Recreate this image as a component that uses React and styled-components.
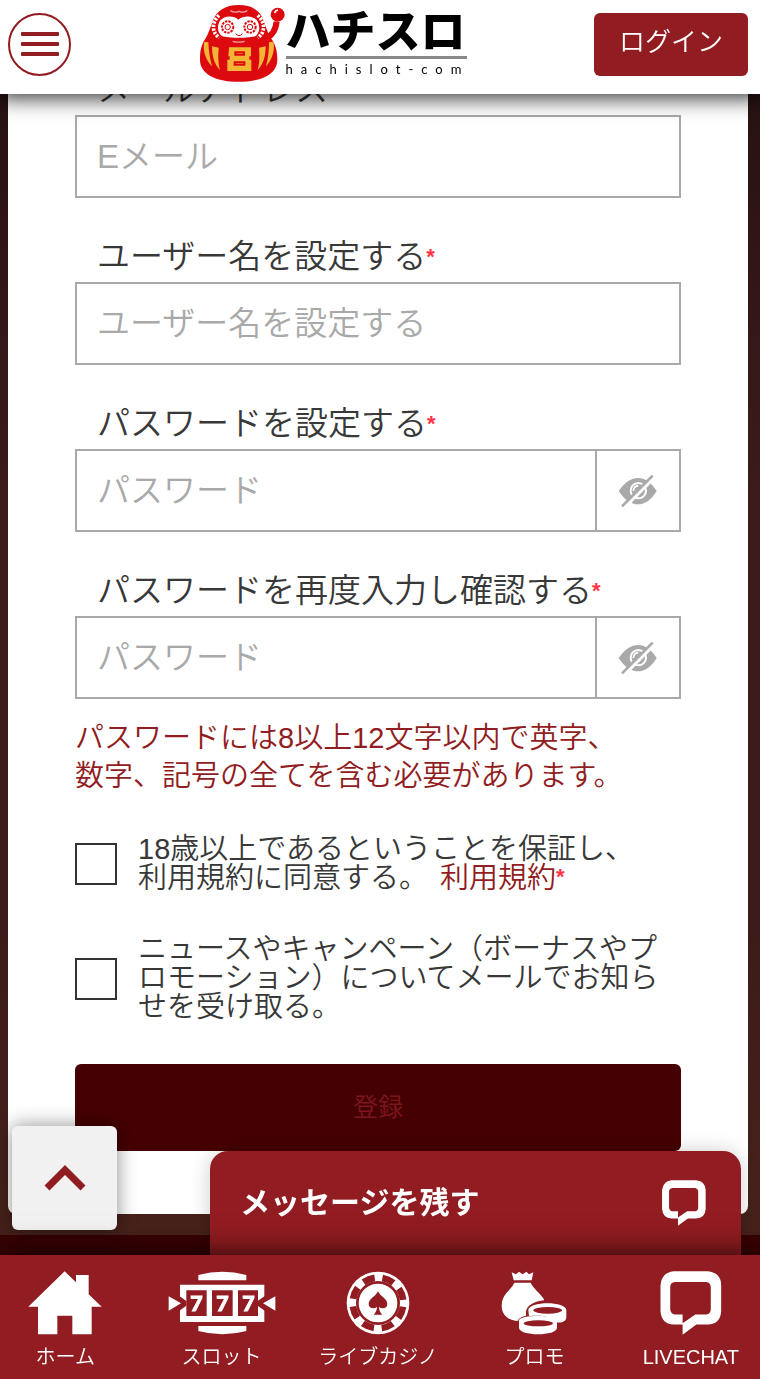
import React from "react";
import styled, { createGlobalStyle } from "styled-components";

const RED = "#911c21";

const GlobalStyle = createGlobalStyle`
  *, *::before, *::after { box-sizing: border-box; }
  html, body { margin: 0; padding: 0; }
  body {
    background: #3a0003;
    color: #383838;
    font-family: "Liberation Sans", "Noto Sans CJK JP", sans-serif;
    font-weight: 350;
  }
  button, input { font: inherit; }
  button { line-height: 1; }
`;

const Header = styled.header`
  position: fixed;
  top: 0;
  left: 0;
  right: 0;
  z-index: 10;
  height: 94px;
  padding: 0 12px 6px 8px;
  display: flex;
  align-items: center;
  justify-content: space-between;
  background: #fff;
  box-shadow: 0 2px 20px 2px rgba(0, 0, 0, 0.8);
`;

const MenuButton = styled.button`
  width: 63px;
  height: 63px;
  padding: 0;
  border: 2px solid ${RED};
  border-radius: 50%;
  background: none;
  display: flex;
  flex-direction: column;
  align-items: center;
  justify-content: center;
  gap: 6px;
`;

const MenuBar = styled.span`
  width: 38px;
  height: 4px;
  border-radius: 1px;
  background: ${RED};
`;

const Logo = styled.a`
  display: flex;
  align-items: flex-start;
  padding-bottom: 2px;
  color: #000;
  text-decoration: none;
`;

const Wordmark = styled.span`
  display: flex;
  flex-direction: column;
  width: 181px;
`;

const WordmarkName = styled.span`
  padding-bottom: 2px;
  border-bottom: 3px solid #888;
  font-family: "Noto Sans CJK JP", sans-serif;
  font-size: 45px;
  line-height: 50px;
  font-weight: 900;
`;

const WordmarkDomain = styled.span`
  font-family: Lato, sans-serif;
  font-size: 13px;
  line-height: 20px;
  font-weight: 400;
  letter-spacing: 8px;
  white-space: nowrap;
`;

const LoginButton = styled.button`
  width: 154px;
  height: 63px;
  padding: 0 0 4px;
  border: 0;
  border-radius: 6px;
  background: ${RED};
  color: #fff;
  font-size: 26px;
`;

const Main = styled.main`
  padding: 0 12px 21px 8px;
  background: linear-gradient(#241010, #3c1b1a 40%, #3c1b1a 75%, #48221b);
`;

const Card = styled.form`
  padding: 65px 67px 63px;
  background: #fff;
  border-radius: 0 0 8px 8px;
`;

const Fields = styled.div`
  display: flex;
  flex-direction: column;
  gap: 34px;
`;

const Label = styled.label`
  display: block;
  padding-left: 22px;
  font-size: 33px;
  line-height: 50px;
`;

const Star = styled.span`
  color: #ff3347;
  font-size: 22px;
  line-height: 1;
  font-weight: 700;
  vertical-align: 4px;
`;

const InputBox = styled.div`
  display: flex;
  height: 83px;
  border: 2px solid #a9a9a9;
`;

const TextInput = styled.input`
  flex: 1;
  min-width: 0;
  padding: 0 20px;
  border: 0;
  background: none;
  color: #333;
  font-size: 33px;
  outline-color: ${RED};
  &::placeholder { color: #a9a9a9; opacity: 1; }
`;

const RevealButton = styled.button`
  width: 84px;
  padding: 0;
  border: 0;
  border-left: 2px solid #a9a9a9;
  background: none;
  display: grid;
  place-items: center;
`;

const Hint = styled.p`
  margin: 20px 0 40px;
  color: ${RED};
  font-size: 29px;
  line-height: 38px;
`;

const Agreements = styled.div`
  display: flex;
  flex-direction: column;
  gap: 42px;
  margin: 40px 0 42px;
`;

const Agreement = styled.div`
  display: flex;
  align-items: center;
  gap: 21px;
  font-size: 29px;
  line-height: 29px;
`;

const Checkbox = styled.input`
  appearance: none;
  flex: none;
  width: 42px;
  height: 42px;
  margin: 0;
  border: 2px solid #333;
  background: #fff;
  &:checked { background: ${RED}; }
`;

const TermsLink = styled.a`
  margin-left: 4px;
  color: ${RED};
  text-decoration: none;
`;

const SubmitButton = styled.button`
  display: block;
  width: 100%;
  height: 87px;
  padding: 0;
  border: 0;
  border-radius: 6px;
  background: #450003;
  color: #7d161d;
  font-size: 25px;
`;

const PageFooter = styled.footer`
  height: 143px;
  background: #3a0003;
`;

const ScrollTop = styled.button`
  position: fixed;
  left: 12px;
  bottom: 149px;
  z-index: 5;
  width: 105px;
  height: 104px;
  padding: 0;
  border: 0;
  border-radius: 6px;
  background: #f1f1f1;
  box-shadow: 0 0 20px rgba(0, 0, 0, 0.45);
  display: grid;
  place-items: center;
`;

const ChatBar = styled.button`
  position: fixed;
  right: 19px;
  bottom: 124px;
  z-index: 6;
  width: 531px;
  max-width: 90%;
  height: 104px;
  padding: 0 34px 0 30px;
  border: 0;
  border-radius: 18px 18px 0 0;
  background: ${RED};
  box-shadow: 0 0 20px rgba(0, 0, 0, 0.2);
  color: #fff;
  font-size: 30px;
  font-weight: 700;
  display: flex;
  align-items: center;
  justify-content: space-between;
`;

const BottomNav = styled.nav`
  position: fixed;
  left: 0;
  right: 0;
  bottom: 0;
  z-index: 10;
  height: 124px;
  background: ${RED};
  box-shadow: 0 0 28px rgba(0, 0, 0, 0.8);
`;

const NavList = styled.ul`
  margin: 0 -9px 0 -13px;
  padding: 16px 0 0;
  list-style: none;
  display: grid;
  grid-template-columns: repeat(5, 1fr);
`;

const NavLink = styled.a`
  display: flex;
  flex-direction: column;
  align-items: center;
  gap: 7px;
  color: #fff;
  font-size: 20px;
  line-height: 30px;
  text-decoration: none;
`;

function Daruma() {
  return (
    <svg width="87" height="79" viewBox="27 9 261 237" aria-hidden="true">
      <path d="M226 112C244 106 256 92 260 62" fill="none" stroke="#dc0a0f" strokeWidth="18" />
      <circle cx="263" cy="41" r="21" fill="#dc0a0f" />
      <path d="M254 36Q256 28 264 27" fill="none" stroke="#fff" strokeWidth="5" />
      <path
        d="M146 12C104 12 80 30 69 58C61 80 56 98 45 115C33 134 30 150 30 176C30 218 74 242 146 242C218 242 262 218 262 176C262 148 256 130 243 112C232 94 228 78 220 57C210 30 188 12 146 12Z"
        fill="#dc0a0f"
      />
      <path
        d="M145 56C132 43 103 43 91 58C80 73 82 96 96 105C112 112 180 112 197 105C211 94 211 71 200 57C188 43 159 43 145 56Z"
        fill="#fff"
      />
      <path d="M87 43C63 65 66 96 88 110M203 43C228 65 225 96 203 110" fill="none" stroke="#fff" strokeWidth="11" strokeDasharray="7 4" />
      <path d="M121 29Q134 37 147 31Q160 37 172 29" fill="none" stroke="#fff" strokeWidth="4" opacity="0.6" />
      <g fill="none" stroke="#dc0a0f">
        <circle cx="113" cy="78" r="17" strokeWidth="6" strokeDasharray="7 3" />
        <circle cx="180" cy="78" r="17" strokeWidth="6" strokeDasharray="7 3" />
        <circle cx="113" cy="78" r="8" strokeWidth="3" />
        <circle cx="180" cy="78" r="8" strokeWidth="3" />
        <path d="M137 98Q147 110 157 98" strokeWidth="3" />
      </g>
      <path d="M128 121Q146 126 164 121" fill="none" stroke="#fff" strokeWidth="4" opacity="0.6" />
      <g fill="#f4b436">
        <path d="M43 122C37 148 47 176 66 196C59 170 56 148 55 124Z" />
        <path d="M66 136C66 166 73 190 90 207C83 180 85 160 86 140Z" />
        <path d="M250 122C256 148 246 176 228 196C235 170 237 148 237 124Z" />
        <path d="M227 136C227 166 220 190 203 207C210 180 208 160 207 140Z" />
        <path d="M117 139H183V166H178V176H184V210H112V176H119V166H115Z" />
      </g>
      <path d="M136 154H162V161H136ZM134 184H163V191H134Z" fill="#f4b436" stroke="#dc0a0f" strokeWidth="6" />
    </svg>
  );
}

function EyeOff() {
  return (
    <svg width="40" height="32" viewBox="0 0 120 96" aria-hidden="true">
      <path d="M2 48C22 20 40 9 60 9C80 9 99 22 116 48C99 76 80 88 60 88C40 88 20 75 2 48Z" fill="#a9a9a9" />
      <circle cx="61" cy="47" r="23" fill="none" stroke="#fff" strokeWidth="6" />
      <path d="M46 48C47 38 52 33 61 32" fill="none" stroke="#fff" strokeWidth="5" />
      <path d="M19 98L110 6" stroke="#fff" strokeWidth="10" />
      <path d="M12 94L104 2" stroke="#a9a9a9" strokeWidth="8" />
    </svg>
  );
}

function ChatIcon({ size }) {
  return (
    <svg width={size} height={size} viewBox="840 662 184 191" aria-hidden="true">
      <path
        fill="#fff"
        fillRule="evenodd"
        d="M880 663H982Q1022 667 1022 705V782Q1020 820 982 822H948L907 852V822H880Q844 820 841 782V705Q844 667 880 663ZM884 695Q870 697 870 710V777Q872 790 884 792H907V818L945 792H978Q990 790 991 777V710Q990 697 978 695Z"
      />
    </svg>
  );
}

function HomeIcon() {
  return (
    <svg width="74" height="64" viewBox="86 663 222 192" aria-hidden="true">
      <path d="M196 664L230 697V675H268V733L307 770H277V853H219V797H174V853H116V770H87Z" fill="#fff" />
    </svg>
  );
}

function SlotIcon() {
  return (
    <svg width="108" height="64" viewBox="23 32 324 192" aria-hidden="true">
      <path d="M114 60V44Q186 24 258 44V60ZM114 197H258V212Q186 232 114 212Z" fill="#fff" />
      <path d="M59 73H312V185H59Z" fill="#fff" />
      <path d="M78 90H139V167H78ZM155 90H217V167H155ZM233 90H293V167H233Z" fill={RED} />
      <path d="M56 106L78 122V136L56 152ZM314 106L292 122V136L314 152Z" fill={RED} />
      <path d="M25 108L62 129L25 151ZM345 108L308 129L345 151Z" fill="#fff" />
      <g fill="#fff" stroke="#fff" strokeWidth="3" fontFamily="Lato, sans-serif" fontWeight="900" fontSize="64" textAnchor="middle">
        <text x="108" y="151">7</text>
        <text x="186" y="151">7</text>
        <text x="264" y="151">7</text>
      </g>
    </svg>
  );
}

function ChipIcon() {
  return (
    <svg width="64" height="64" viewBox="51 32 192 192" aria-hidden="true">
      <circle cx="147" cy="128" r="94" fill="#fff" />
      <circle cx="147" cy="128" r="76" fill="none" stroke={RED} strokeWidth="20" pathLength="80" strokeDasharray="6 4" strokeDashoffset="-2" />
      <circle cx="147" cy="128" r="62" fill="none" stroke={RED} strokeWidth="8" />
      <path
        d="M147 92C152 108 175 114 175 131C175 145 158 148 150 139Q150 153 160 163H134Q144 153 144 139C136 148 119 145 119 131C119 114 142 108 147 92Z"
        fill={RED}
      />
    </svg>
  );
}

function PromoIcon() {
  return (
    <svg width="66" height="64" viewBox="34 32 198 192" aria-hidden="true">
      <path d="M66 36L79 42L88 34L99 42L110 34L118 42L131 36L126 60H72Z" fill="#fff" />
      <path d="M74 67H123C134 88 152 99 163 117L150 182H88C55 181 36 163 36 136C36 100 64 90 74 67Z" fill="#fff" />
      <path d="M109 158C108 138 132 120 172 120H234V184H203L205 205Q190 226 140 224Q86 220 84 186Q82 172 109 166Z" fill={RED} />
      <path d="M88 180C88 163 202 163 202 180V202C202 228 88 228 88 202Z" fill="#fff" />
      <path d="M116 150C116 122 230 122 230 150V170C230 190 200 188 198 184C188 168 150 164 118 168Z" fill="#fff" />
      <ellipse cx="146" cy="189" rx="44" ry="9" fill={RED} />
      <ellipse cx="174" cy="150" rx="43" ry="10" fill={RED} />
    </svg>
  );
}

const fields = [
  { id: "email", label: "メールアドレス", placeholder: "Eメール", type: "email" },
  { id: "username", label: "ユーザー名を設定する", placeholder: "ユーザー名を設定する", type: "text", required: true },
  { id: "password", label: "パスワードを設定する", placeholder: "パスワード", type: "password", required: true, reveal: true },
  { id: "confirm", label: "パスワードを再度入力し確認する", placeholder: "パスワード", type: "password", required: true, reveal: true },
];

const navItems = [
  { label: "ホーム", icon: <HomeIcon /> },
  { label: "スロット", icon: <SlotIcon /> },
  { label: "ライブカジノ", icon: <ChipIcon /> },
  { label: "プロモ", icon: <PromoIcon /> },
  { label: "LIVECHAT", icon: <ChatIcon size={64} /> },
];

function Field({ id, label, placeholder, type, required, reveal }) {
  return (
    <div>
      <Label htmlFor={id}>
        {label}
        {required && <Star>*</Star>}
      </Label>
      <InputBox>
        <TextInput id={id} type={type} placeholder={placeholder} />
        {reveal && (
          <RevealButton type="button" aria-label="パスワードを表示">
            <EyeOff />
          </RevealButton>
        )}
      </InputBox>
    </div>
  );
}

export default function App() {
  return (
    <>
      <GlobalStyle />
      <Header>
        <MenuButton aria-label="メニュー">
          <MenuBar />
          <MenuBar />
          <MenuBar />
        </MenuButton>
        <Logo href="#top">
          <Daruma />
          <Wordmark>
            <WordmarkName>ハチスロ</WordmarkName>
            <WordmarkDomain>hachislot-com</WordmarkDomain>
          </Wordmark>
        </Logo>
        <LoginButton>ログイン</LoginButton>
      </Header>

      <Main>
        <Card onSubmit={(e) => e.preventDefault()}>
          <Fields>
            {fields.map((f) => (
              <Field key={f.id} {...f} />
            ))}
          </Fields>
          <Hint>
            パスワードには8以上12文字以内で英字、
            <br />
            数字、記号の全てを含む必要があります。
          </Hint>
          <Agreements>
            <Agreement>
              <Checkbox type="checkbox" id="terms" />
              <label htmlFor="terms">
                18歳以上であるということを保証し、
                <br />
                利用規約に同意する。 <TermsLink href="#terms">利用規約</TermsLink>
                <Star>*</Star>
              </label>
            </Agreement>
            <Agreement>
              <Checkbox type="checkbox" id="news" />
              <label htmlFor="news">
                ニュースやキャンペーン（ボーナスやプロモーション）についてメールでお知らせを受け取る。
              </label>
            </Agreement>
          </Agreements>
          <SubmitButton>登録</SubmitButton>
        </Card>
      </Main>
      <PageFooter />

      <ScrollTop aria-label="ページの先頭へ">
        <svg width="42" height="26" viewBox="0 0 42 26" aria-hidden="true">
          <path d="M3 23L21 5L39 23" fill="none" stroke={RED} strokeWidth="7" />
        </svg>
      </ScrollTop>
      <ChatBar>
        メッセージを残す
        <ChatIcon size={46} />
      </ChatBar>
      <BottomNav>
        <NavList>
          {navItems.map((item) => (
            <li key={item.label}>
              <NavLink href="#nav">
                {item.icon}
                {item.label}
              </NavLink>
            </li>
          ))}
        </NavList>
      </BottomNav>
    </>
  );
}
